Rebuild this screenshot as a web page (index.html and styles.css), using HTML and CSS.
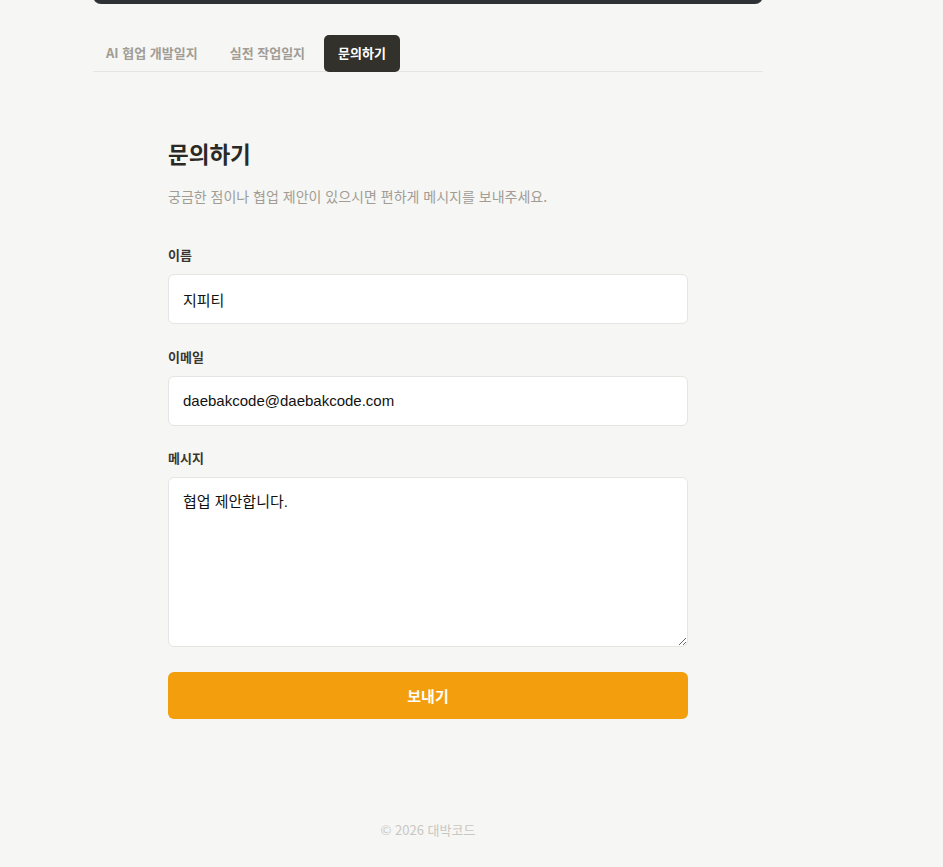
FILE: index.html
```html
<!DOCTYPE html>
<html lang="ko">
<head>
<meta charset="utf-8">
<title>문의하기</title>
<link rel="stylesheet" href="styles.css">
</head>
<body>
<div class="page">
  <div class="topbar"></div>
  <nav class="tabs">
    <a class="tab">AI 협업 개발일지</a>
    <a class="tab">실전 작업일지</a>
    <a class="tab active">문의하기</a>
  </nav>
  <main class="contact">
    <h1 class="title">문의하기</h1>
    <p class="desc">궁금한 점이나 협업 제안이 있으시면 편하게 메시지를 보내주세요.</p>
    <form class="form">
      <label class="field">
        <span class="label">이름</span>
        <input class="input" type="text" value="지피티">
      </label>
      <label class="field">
        <span class="label">이메일</span>
        <input class="input" type="email" value="daebakcode@daebakcode.com">
      </label>
      <label class="field">
        <span class="label">메시지</span>
        <textarea class="input area">협업 제안합니다.</textarea>
      </label>
      <button class="submit" type="button">보내기</button>
    </form>
  </main>
  <footer class="footer">© 2026 대박코드</footer>
</div>
</body>
</html>
```
FILE: styles.css
```css
* { box-sizing: border-box; }
html, body { margin: 0; padding: 0; }
body {
  background: #f6f6f4;
  font-family: "Noto Sans CJK KR", "Noto Sans", sans-serif;
  color: #2b2925;
}
.page {
  width: 670px;
  margin-left: 93px;
}
.topbar {
  height: 60px;
  margin-top: -56px;
  background: #2e3234;
  border-radius: 8px;
}
.tabs {
  display: flex;
  gap: 6px;
  margin-top: 31px;
  border-bottom: 1px solid #e6e5e2;
}
.tab {
  display: block;
  padding: 0 13px;
  height: 37px;
  line-height: 36px;
  font-size: 13px;
  font-weight: 700;
  color: #a19d96;
  border-radius: 5px;
  margin-bottom: -1px;
}
.tab.active {
  padding: 0 14px;
  background: #33312c;
  color: #ffffff;
}
.contact {
  width: 520px;
  margin: 0 auto;
  padding-top: 64px;
}
.title {
  margin: 0;
  font-size: 22.5px;
  font-weight: 700;
  line-height: 34px;
  color: #2b2925;
}
.desc {
  margin: 16px 0 0;
  font-size: 14px;
  line-height: 20px;
  color: #a19d96;
}
.form {
  display: flex;
  flex-direction: column;
  gap: 23.5px;
  margin-top: 40px;
}
.field {
  display: flex;
  flex-direction: column;
  gap: 10px;
}
.label {
  font-size: 13px;
  font-weight: 700;
  line-height: 18px;
  color: #3a3733;
}
.input {
  width: 100%;
  height: 50px;
  padding: 0 14px;
  border: 1px solid #e6e5e2;
  border-radius: 6px;
  background: #fff;
  font-family: "Liberation Sans", "Noto Sans CJK KR", sans-serif;
  font-size: 15px;
  color: #111;
  outline: none;
}
.area {
  height: 170px;
  padding: 14px;
  line-height: 20px;
  resize: vertical;
}
.submit {
  height: 47px;
  margin-top: 1.5px;
  border: 0;
  border-radius: 6px;
  background: #f39e0c;
  color: #fff;
  font-family: "Noto Sans CJK KR", sans-serif;
  font-size: 15px;
  font-weight: 700;
}
.footer {
  margin-top: 101px;
  text-align: center;
  font-size: 13px;
  color: #c9c7c2;
  line-height: 20px;
}
```
